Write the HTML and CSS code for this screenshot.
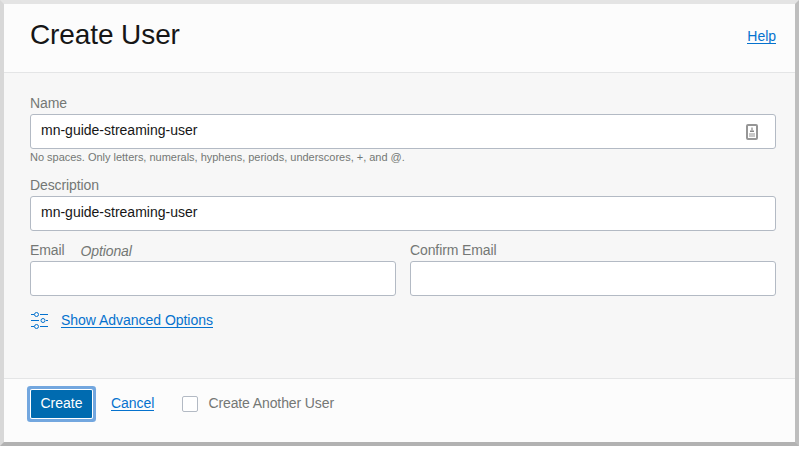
FILE: index.html
```html
<!DOCTYPE html>
<html lang="en">
<head>
<meta charset="utf-8">
<title>Create User</title>
<link rel="stylesheet" href="styles.css">
</head>
<body>
<form class="dialog">
  <header class="header">
    <h1 class="title">Create User</h1>
    <a class="link help" href="#">Help</a>
  </header>
  <main class="body">
    <div class="field">
      <label class="label" for="name">Name</label>
      <div class="input-box">
        <input class="input" id="name" type="text" value="mn-guide-streaming-user">
        <svg class="autofill" width="12" height="16" viewBox="0 0 12 16">
          <rect x="1" y="1" width="10" height="14" rx="1" fill="#fff" stroke="#969696" stroke-width="2"/>
          <path d="M6 3.5v3" stroke="#999" stroke-width="1.4"/>
          <path d="M4 8V6.5h4V8z" fill="#888"/>
          <path d="M3 10h6M3 12h6" stroke="#b8b8b8" stroke-width="1.6"/>
        </svg>
      </div>
      <p class="hint">No spaces. Only letters, numerals, hyphens, periods, underscores, +, and @.</p>
    </div>
    <div class="field">
      <label class="label" for="description">Description</label>
      <div class="input-box"><input class="input" id="description" type="text" value="mn-guide-streaming-user"></div>
    </div>
    <div class="row">
      <div class="field">
        <label class="label" for="email">Email <em class="optional">Optional</em></label>
        <div class="input-box"><input class="input" id="email" type="text"></div>
      </div>
      <div class="field">
        <label class="label" for="confirm">Confirm Email</label>
        <div class="input-box"><input class="input" id="confirm" type="text"></div>
      </div>
    </div>
    <div class="advanced">
      <svg class="sliders" width="18" height="18" viewBox="0 0 18 18" fill="none" stroke="#0572ce">
        <path d="M0 2.5h3M9 2.5h8M0 8.5h8M15 8.5h2M0 14.5h3M9 14.5h8"/>
        <circle cx="5.5" cy="2.5" r="2"/>
        <circle cx="12" cy="8.5" r="2"/>
        <circle cx="5.5" cy="14.5" r="2"/>
      </svg>
      <a class="link" href="#">Show Advanced Options</a>
    </div>
  </main>
  <footer class="footer">
    <button class="create" type="button">Create</button>
    <a class="link cancel" href="#">Cancel</a>
    <label class="another"><input class="checkbox" type="checkbox">Create Another User</label>
  </footer>
</form>
</body>
</html>
```
FILE: styles.css
```css
* { box-sizing: border-box; }
body {
  margin: 0;
  background: #fff;
  color: #747775;
  font: 14px/20px "Liberation Sans", Arial, sans-serif;
}
.dialog {
  display: flex;
  flex-direction: column;
  height: 446px;
  border: 4px solid;
  border-color: #e4e4e4 #bebebe #b2b2b2 #d8d8d8;
  background: #fcfcfc;
}
.header {
  display: flex;
  justify-content: space-between;
  height: 69px;
  padding: 12px 19px 0 26px;
  border-bottom: 1px solid #e4e5e6;
}
.title {
  margin: 1px 0 0;
  color: #161616;
  font-size: 28px;
  font-weight: 400;
  line-height: 36px;
  letter-spacing: -0.1px;
}
.link {
  height: 16px;
  border-bottom: 1px solid #0572ce;
  color: #0572ce;
  line-height: 16px;
  letter-spacing: -0.03px;
  text-decoration: none;
}
.help { margin-top: 12px; }
.body {
  flex: 1;
  padding: 20px 19px 0 26px;
  background: #f7f7f7;
}
.label {
  display: flex;
  height: 21px;
  letter-spacing: -0.11px;
}
.input-box {
  display: flex;
  align-items: center;
  height: 35px;
  padding: 0 17px 0 10px;
  border: 1px solid #b3bac4;
  border-radius: 3px;
  background: #fff;
}
.input {
  flex: 1;
  min-width: 0;
  height: 30px;
  margin-top: -4px;
  padding: 0;
  border: 0;
  outline: 0;
  background: none;
  color: #161616;
  font: inherit;
}
.hint {
  height: 26px;
  margin: 0;
  font-size: 11px;
  line-height: 17px;
  letter-spacing: -0.015px;
}
.row {
  display: grid;
  grid-template-columns: 1fr 1fr;
  gap: 14px;
  margin-top: 9px;
}
.optional {
  margin: 1px 0 0 16px;
}
.advanced {
  display: flex;
  gap: 12px;
  margin-top: 16px;
}
.sliders { margin-left: 1px; }
.footer {
  display: flex;
  height: 64px;
  padding: 11px 19px 0 27px;
  border-top: 1px solid #e4e5e6;
}
.create {
  width: 61px;
  height: 28px;
  padding: 0 0 2px;
  border: 0;
  border-radius: 1px;
  background: #006bb0;
  box-shadow: 0 0 0 1px #fff, 0 0 0 4px #73a7df;
  color: #fff;
  font: inherit;
}
.cancel { margin: 5px 0 0 19px; }
.another {
  display: flex;
  height: 20px;
  margin: 3px 0 0 28px;
  letter-spacing: -0.11px;
}
.checkbox {
  width: 16px;
  height: 16px;
  margin: 3px 10px 0 0;
  border: 1px solid #b3bac4;
  border-radius: 2px;
  background: #fff;
  appearance: none;
}
```
